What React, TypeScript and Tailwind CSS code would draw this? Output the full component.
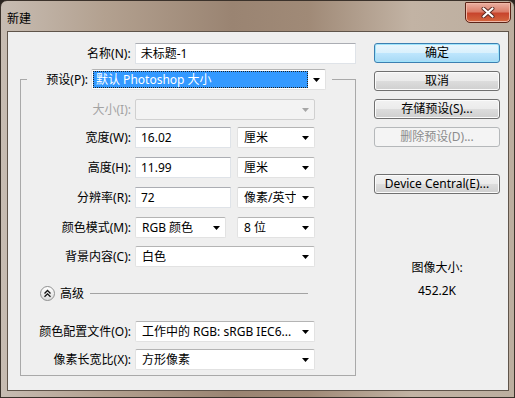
import type { ReactNode } from "react";

const FONT = "font-['Tahoma','Noto_Sans','Noto_Sans_CJK_SC',sans-serif]";

function Arrow({ gray }: { gray?: boolean }) {
  return (
    <svg width="7" height="4" viewBox="0 0 7 4" className="shrink-0">
      <path d="M0 0H7L3.5 4Z" fill={gray ? "#a6a6a6" : "#000"} />
    </svg>
  );
}

function Field({ value, className }: { value: string; className: string }) {
  return (
    <div
      className={`flex h-[21px] items-center border border-[#dfe3e8] border-t-[#abadb3] bg-white pl-[5px] ${className}`}
    >
      {value}
    </div>
  );
}

function Select({
  value,
  className,
  disabled,
}: {
  value?: string;
  className: string;
  disabled?: boolean;
}) {
  return (
    <div
      className={`flex h-[21px] items-center justify-between rounded-[2px] border pl-[6px] pr-[5px] ${
        disabled
          ? "border-[#d0d0d0] bg-[#f3f3f3]"
          : "border-[#e2e2e2] border-t-[#b4b4b4] bg-white"
      } ${className}`}
    >
      <span className="truncate">{value}</span>
      <Arrow gray={disabled} />
    </div>
  );
}

function Row({
  label,
  disabled,
  className,
  children,
}: {
  label: string;
  disabled?: boolean;
  className: string;
  children: ReactNode;
}) {
  return (
    <div className={`flex items-center ${className}`}>
      <div
        className={`w-[114px] pr-[4px] text-right ${disabled ? "text-[#a3a3a3]" : "text-black"}`}
      >
        {label}
      </div>
      {children}
    </div>
  );
}

function Button({
  label,
  kind = "normal",
}: {
  label: string;
  kind?: "normal" | "default" | "disabled";
}) {
  const look =
    kind === "default"
      ? "border-[#3c7fb1] bg-[linear-gradient(#eaf6fd_0%,#d9f0fc_50%,#bee6fd_50%,#a7d9f5_100%)] shadow-[inset_0_0_0_1px_#9fe4fb]"
      : kind === "disabled"
        ? "border-[#b5b8ba] bg-[#f4f4f4] text-[#8c8c8c]"
        : "border-[#707070] bg-[linear-gradient(#f2f2f2_0%,#ebebeb_50%,#dddddd_50%,#cfcfcf_100%)] shadow-[inset_0_0_0_1px_#fbfbfb]";
  return (
    <div
      className={`flex h-[20px] w-[126px] items-center justify-center rounded-[3px] border ${look}`}
    >
      {label}
    </div>
  );
}

export default function App() {
  return (
    <div
      className={`h-[398px] w-[515px] overflow-hidden bg-[#2a2420] text-[12px] leading-[16px] text-black ${FONT}`}
    >
      <div className="flex h-full flex-col rounded-t-[7px] border border-[#3b322b] bg-[linear-gradient(90deg,#c7bcb2_0%,#b3a190_20%,#9a8472_45%,#a08a77_60%,#c2b3a4_80%,#bcae9f_100%)]">
        {/* title bar */}
        <div className="flex h-[30px] shrink-0 items-start justify-between">
          <div className="pl-[6px] pt-[10px] text-black">新建</div>
          <div className="mr-[3px] mt-[1px] flex h-[21px] w-[46px] items-center justify-center rounded-b-[5px] rounded-t-[1px] border border-[#5c2418] bg-[linear-gradient(#eab0a2_0%,#dc7f6b_45%,#c8452d_55%,#d4683f_100%)] shadow-[inset_0_0_0_1px_#f0b7a6]">
            <svg width="14" height="11" viewBox="0 0 14 11">
              <path d="M2.5 1.5L11.5 9.5M11.5 1.5L2.5 9.5" stroke="#5a2a22" strokeWidth="4" strokeLinecap="round" />
              <path d="M2.5 1.5L11.5 9.5M11.5 1.5L2.5 9.5" stroke="#ffffff" strokeWidth="2.2" strokeLinecap="round" />
            </svg>
          </div>
        </div>

        {/* client area */}
        <div className="mb-[6px] ml-[6px] mr-[5px] flex flex-1 border border-[#5f544a] bg-[#efefef]">
          <div className="w-[348px] shrink-0 pl-[12px] pt-[11px]">
            <div className="flex items-center">
              <div className="w-[115px] pr-[4px] text-right">名称(N):</div>
              <Field value="未标题-1" className="w-[222px]" />
            </div>

            <fieldset className="mt-[5px] w-[336px] border border-[#a9a9a9] pb-[5px]">
              <legend className="ml-[6px] pl-[15px] pr-[6px]">
                <div className="flex items-center">
                  <div className="w-[46px] text-right">预设(P):</div>
                  <div className="ml-[3px] flex h-[21px] w-[235px] items-center rounded-[2px] border border-[#e2e2e2] border-t-[#b4b4b4] bg-white pl-[1px]">
                    <div className="flex h-[17px] w-[215px] items-center border border-dotted border-[#222] bg-[#3399ff] pl-[2px] text-white">
                      默认 Photoshop 大小
                    </div>
                    <div className="flex flex-1 justify-center">
                      <Arrow />
                    </div>
                  </div>
                </div>
              </legend>

              <Row label="大小(I):" disabled className="mt-[9px]">
                <Select className="w-[180px]" disabled />
              </Row>
              <Row label="宽度(W):" className="mt-[7px]">
                <Field value="16.02" className="w-[96px]" />
                <Select value="厘米" className="ml-[6px] w-[78px]" />
              </Row>
              <Row label="高度(H):" className="mt-[9px]">
                <Field value="11.99" className="w-[96px]" />
                <Select value="厘米" className="ml-[6px] w-[78px]" />
              </Row>
              <Row label="分辨率(R):" className="mt-[9px]">
                <Field value="72" className="w-[96px]" />
                <Select value="像素/英寸" className="ml-[6px] w-[78px]" />
              </Row>
              <Row label="颜色模式(M):" className="mt-[9px]">
                <Select value="RGB 颜色" className="w-[91px]" />
                <Select value="8 位" className="ml-[11px] w-[78px]" />
              </Row>
              <Row label="背景内容(C):" className="mt-[8px]">
                <Select value="白色" className="w-[180px]" />
              </Row>

              <div className="ml-[19px] mt-[19px] flex h-[15px] items-center">
                <div className="flex h-[15px] w-[15px] items-center justify-center rounded-full border border-[#8f9090] bg-[linear-gradient(#ffffff,#dcdcdc)]">
                  <svg width="9" height="9" viewBox="0 0 9 9">
                    <path d="M1.5 4.5L4.5 1.5L7.5 4.5M1.5 7.8L4.5 4.8L7.5 7.8" fill="none" stroke="#111" strokeWidth="1.3" />
                  </svg>
                </div>
                <div className="ml-[5px]">高级</div>
                <div className="ml-[6px] mr-[47px] h-px flex-1 bg-[#a3a3a3]" />
              </div>

              <Row label="颜色配置文件(O):" className="mt-[20px]">
                <Select value="工作中的 RGB: sRGB IEC6..." className="w-[180px]" />
              </Row>
              <Row label="像素长宽比(X):" className="mt-[7px]">
                <Select value="方形像素" className="w-[180px]" />
              </Row>
            </fieldset>
          </div>

          <div className="flex-1 pl-[18px] pt-[11px]">
            <div className="flex w-[126px] flex-col gap-[8px]">
              <Button label="确定" kind="default" />
              <Button label="取消" />
              <Button label="存储预设(S)..." />
              <Button label="删除预设(D)..." kind="disabled" />
            </div>
            <div className="mt-[27px] w-[126px]">
              <Button label="Device Central(E)..." />
            </div>
            <div className="mt-[66px] w-[126px] text-center">图像大小:</div>
            <div className="mt-[7px] w-[126px] text-center">452.2K</div>
          </div>
        </div>
      </div>
    </div>
  );
}
